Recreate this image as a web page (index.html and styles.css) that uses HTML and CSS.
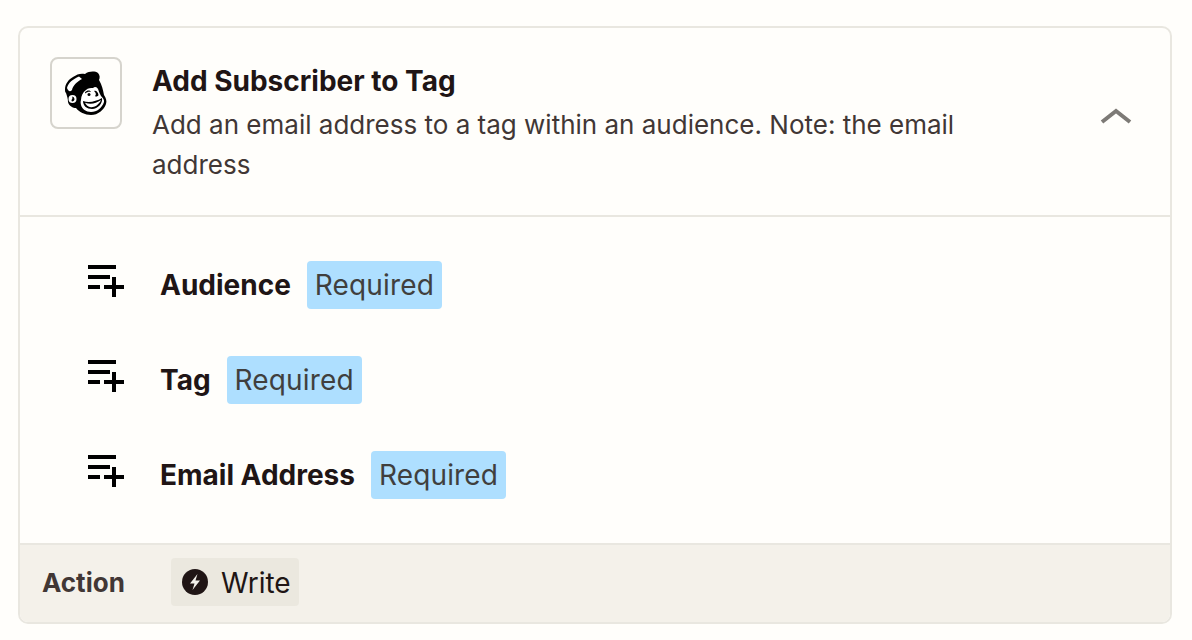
FILE: index.html
```html
<!DOCTYPE html>
<html lang="en">
<head>
<meta charset="utf-8">
<title>Add Subscriber to Tag</title>
<link rel="stylesheet" href="styles.css">
</head>
<body>
<section class="card">
  <header class="head">
    <div class="logo">
      <svg width="42" height="44" viewBox="0 0 42 44">
        <path fill="#000" d="M0 18C0 13 4 8 8 6 12 3 16 2 20 3 24 0 30 0 33 2 35 4 35 7 34 9 37 14 38 19 39 24 41 27 42 30 41 33 39 39 33 44 26 44 20 44 14 41 11 37 8 37 4 35 3 31 3 28 2 25 1 22 0 21 0 20 0 18z"/>
        <path fill="#fff" d="M2 17C3 12 8 8 14 5.500L17 8C12 10.500 8 14.500 7 19 5 21.500 3 20 2 17z"/>
        <path fill="#fff" d="M16 29C16 25 18 21 21 19 23 17 26 17 28 17 30 15 32 16 33 18 34 21 35 23 36 25 38 27 39.500 29 39 31 37 37 32 41 26 41 21 41 17 38 16 34 15.500 32 15.500 30 16 29z"/>
        <path fill="#000" d="M18 30C24 32 31 30.500 37 27 38 32 33 38 27 38 22 38 18 35 18 30z"/>
        <path fill="#fff" d="M20 31.800C26 33.800 31 32.500 36 29 34 34 29 36.500 26 36.200 23 36 21 34 20 31.800z"/>
        <path fill="#000" d="M20 21.500C22 19 25 19 26 21 24 20.500 22 21 20 22.500z"/>
        <circle cx="24" cy="23.500" r="1.500" fill="#000"/>
        <path fill="#000" d="M29 20C31 19 33 21 33.500 24 33 25.500 31 26 30 25 31.500 24 31 21.500 29 20z"/>
        <circle cx="7.500" cy="28" r="4" fill="#fff"/>
        <path fill="#000" d="M7 25.500a2.700 2.700 0 0 1 2.500 2.500c0 1.400-1 2.500-2.500 2.500-.8-1-.6-1.800 0-2.300.5-.6.600-1.500 0-2.700z"/>
      </svg>
    </div>
    <div class="head-text">
      <h2 class="title">Add Subscriber to Tag</h2>
      <p class="desc">Add an email address to a tag within an audience. Note: the email address</p>
    </div>
    <svg class="chevron" width="32" height="18" viewBox="0 0 32 18">
      <path d="M2 16 16 5l14 11" fill="none" stroke="#7d7a76" stroke-width="4"/>
    </svg>
  </header>
  <ul class="fields">
    <li class="field">
      <svg class="plus" width="38" height="34" viewBox="0 0 38 34"><path d="M2 3h28M2 13h22M2 23h12M18 23h20M28 13v20" fill="none" stroke="#000" stroke-width="4"/></svg>
      <span class="name">Audience</span><span class="req">Required</span>
    </li>
    <li class="field">
      <svg class="plus" width="38" height="34" viewBox="0 0 38 34"><path d="M2 3h28M2 13h22M2 23h12M18 23h20M28 13v20" fill="none" stroke="#000" stroke-width="4"/></svg>
      <span class="name">Tag</span><span class="req">Required</span>
    </li>
    <li class="field">
      <svg class="plus" width="38" height="34" viewBox="0 0 38 34"><path d="M2 3h28M2 13h22M2 23h12M18 23h20M28 13v20" fill="none" stroke="#000" stroke-width="4"/></svg>
      <span class="name">Email Address</span><span class="req">Required</span>
    </li>
  </ul>
  <footer class="foot">
    <span class="foot-label">Action</span>
    <span class="chip">
      <svg width="26" height="26" viewBox="0 0 26 26"><circle cx="13" cy="13" r="13" fill="#201515"/><path d="M15.500 5 8 14.500h4.500L10.500 21l7.500-9.500h-4.500z" fill="#f3f0ea"/></svg>
      <span class="chip-text">Write</span>
    </span>
  </footer>
</section>
</body>
</html>
```
FILE: styles.css
```css
* { box-sizing: border-box; }
html, body { margin: 0; }
body {
  width: 1192px;
  height: 640px;
  background: #fffefb;
  padding: 26px 20px 16px 18px;
  font-family: Inter, "Liberation Sans", sans-serif;
  color: #201515;
  overflow: hidden;
}
.card {
  height: 598px;
  border: 2px solid #e9e7e0;
  border-radius: 10px;
  display: flex;
  flex-direction: column;
  overflow: hidden;
}
.head {
  height: 189px;
  flex: none;
  border-bottom: 2px solid #e9e7e0;
  display: flex;
  align-items: flex-start;
  padding: 29px 0 0 30px;
  position: relative;
}
.logo {
  width: 72px;
  height: 72px;
  flex: none;
  border: 2px solid #d6d4cd;
  border-radius: 8px;
  background: #fffefb;
  display: flex;
  align-items: center;
  justify-content: center;
}
.head-text { width: 860px; margin-left: 30px; }
.title {
  margin: 7px 0 0;
  font-size: 28px;
  line-height: 34px;
  font-weight: 700;
  color: #201515;
}
.desc {
  margin: 7px 0 0;
  font-size: 26px;
  line-height: 40px;
  font-weight: 400;
  color: #413735;
}
.chevron { position: absolute; left: 1080px; top: 78px; }
.fields {
  flex: 1;
  list-style: none;
  margin: 0;
  padding: 44px 0 0 66px;
  display: flex;
  flex-direction: column;
  gap: 47px;
}
.field { display: flex; align-items: center; height: 48px; }
.plus { flex: none; margin-top: -8px; }
.name { margin-left: 36px; font-size: 28px; font-weight: 700; }
.req {
  margin-left: 16px;
  height: 48px;
  padding: 0 8px;
  background: #aedfff;
  border-radius: 4px;
  font-size: 28px;
  line-height: 48px;
  letter-spacing: 0.15px;
  color: #403f3e;
}
.foot {
  height: 79px;
  flex: none;
  background: #f4f1ea;
  border-top: 2px solid #e9e7e0;
  display: flex;
  align-items: center;
  padding: 0 0 4px 22px;
}
.foot-label { width: 129px; padding-top: 2px; font-size: 26px; font-weight: 700; color: #413735; }
.chip {
  height: 48px;
  display: flex;
  align-items: center;
  gap: 13px;
  padding: 0 8px 0 11px;
  background: #ebe8df;
  border-radius: 4px;
  font-size: 28px;
}
.chip-text { padding-top: 2px; }
```
